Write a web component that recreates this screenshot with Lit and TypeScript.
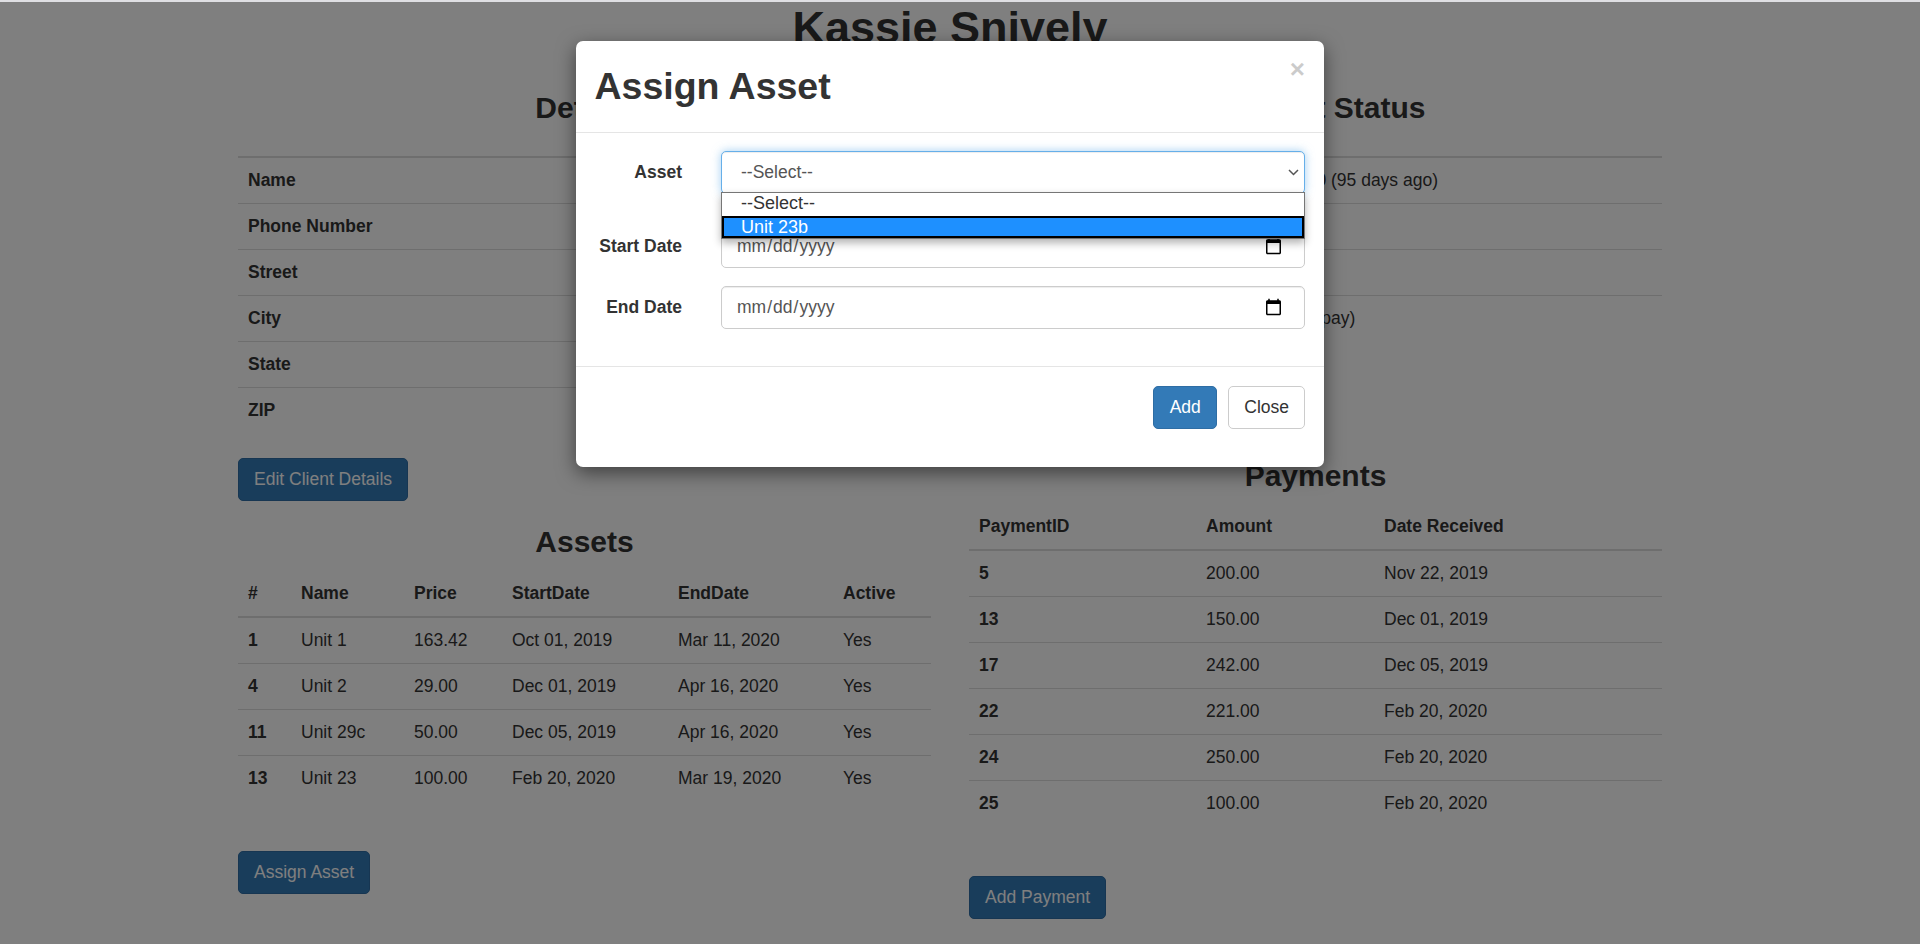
import { LitElement, css, html } from 'lit';
import { customElement } from 'lit/decorators.js';

const clientRows = [
  ['Name', 'Kassie Snively'],
  ['Phone Number', ''],
  ['Street', ''],
  ['City', ''],
  ['State', ''],
  ['ZIP', ''],
];

const statusRows = [
  ['Last Payment', 'Feb 20, 2020 (95 days ago)'],
  ['Assets', '4'],
  ['Payments', '6'],
  ['Balance', '1,163.42 (to pay)'],
];

const assets = [
  ['1', 'Unit 1', '163.42', 'Oct 01, 2019', 'Mar 11, 2020', 'Yes'],
  ['4', 'Unit 2', '29.00', 'Dec 01, 2019', 'Apr 16, 2020', 'Yes'],
  ['11', 'Unit 29c', '50.00', 'Dec 05, 2019', 'Apr 16, 2020', 'Yes'],
  ['13', 'Unit 23', '100.00', 'Feb 20, 2020', 'Mar 19, 2020', 'Yes'],
];

const payments = [
  ['5', '200.00', 'Nov 22, 2019'],
  ['13', '150.00', 'Dec 01, 2019'],
  ['17', '242.00', 'Dec 05, 2019'],
  ['22', '221.00', 'Feb 20, 2020'],
  ['24', '250.00', 'Feb 20, 2020'],
  ['25', '100.00', 'Feb 20, 2020'],
];

@customElement('app-root')
export class AppRoot extends LitElement {
  static styles = css`
    :host {
      display: block;
      height: 944px;
      overflow: hidden;
      position: relative;
      background: #fff;
      border-top: 2px solid #dfdfe3;
      color: #333;
      font-family: 'Liberation Sans', Arial, sans-serif;
      font-size: 17.5px;
      line-height: 25px;
    }
    * {
      box-sizing: border-box;
    }
    h1 {
      margin: 1px 0 0;
      padding-right: 20px;
      font-size: 45px;
      line-height: 50px;
      font-weight: 700;
      text-align: center;
    }
    h3 {
      margin: 0;
      font-size: 30px;
      line-height: 33px;
      font-weight: 700;
      text-align: center;
    }
    .columns {
      display: grid;
      grid-template-columns: 1fr 1fr;
      column-gap: 38px;
      padding: 0 258px 0 238px;
      margin-top: 38px;
    }
    .col {
      min-width: 0;
    }
    table {
      width: 100%;
      border-collapse: collapse;
      table-layout: fixed;
    }
    th,
    td {
      padding: 10px;
      text-align: left;
      border-top: 1px solid #ddd;
      font-weight: 400;
      white-space: nowrap;
    }
    th,
    td.key {
      font-weight: 700;
    }
    thead th {
      border-top: 0;
      border-bottom: 2px solid #ddd;
    }
    .detail {
      margin-top: 32px;
      border-top: 2px solid #ddd;
    }
    .detail tr:first-child td {
      border-top: 0;
    }
    .client .label-col {
      width: 50%;
    }
    .status .label-col {
      width: 244px;
    }
    .btn {
      display: inline-block;
      padding: 8px 15px;
      font: inherit;
      height: 43px;
      color: #fff;
      background: #337ab7;
      border: 1px solid #2e6da4;
      border-radius: 5px;
    }
    .btn.plain {
      color: #333;
      background: #fff;
      border-color: #ccc;
    }
    .btn.add {
      width: 64px;
      padding: 8px 0;
    }
    .edit {
      margin-top: 25px;
    }
    .assets-title {
      margin-top: 24px;
    }
    .assets-table {
      margin-top: 13px;
    }
    .assign {
      margin-top: 50px;
    }
    .payments-title {
      margin-top: 118px;
    }
    .payments-table {
      margin-top: 12px;
    }
    .add-pay {
      margin-top: 50px;
    }
    .a1 { width: 53px; }
    .a2 { width: 113px; }
    .a3 { width: 98px; }
    .a4 { width: 166px; }
    .a5 { width: 165px; }
    .p1 { width: 227px; }
    .p2 { width: 178px; }
    .backdrop {
      position: absolute;
      inset: 0;
      background: rgba(0, 0, 0, 0.5);
    }
    .modal {
      position: absolute;
      left: 576px;
      top: 39px;
      width: 748px;
      height: 426px;
      background: #fff;
      border-radius: 7px;
      box-shadow: 0 6px 19px rgba(0, 0, 0, 0.5);
    }
    .modal-header {
      position: relative;
      height: 92px;
      padding: 25px 19px 0 18.5px;
      border-bottom: 1px solid #e5e5e5;
    }
    .modal-header h2 {
      margin: 0;
      font-size: 37.5px;
      line-height: 41px;
      font-weight: 700;
    }
    .close {
      position: absolute;
      right: 19px;
      top: 15px;
      font-size: 26px;
      line-height: 26px;
      font-weight: 700;
      color: #000;
      opacity: 0.2;
    }
    .modal-body {
      position: relative;
      height: 234px;
      padding: 18px 19px 0 0;
      border-bottom: 1px solid #e5e5e5;
    }
    .row {
      display: grid;
      grid-template-columns: 106px 1fr;
      column-gap: 39px;
      align-items: center;
      margin-bottom: 18px;
    }
    .row.asset {
      margin-bottom: 31px;
    }
    .row label {
      text-align: right;
      font-weight: 700;
    }
    .control {
      display: block;
      width: 100%;
      height: 43px;
      padding: 7px 15px 7px 14px;
      font: inherit;
      color: #555;
      background: #fff;
      border: 1px solid #ccc;
      border-radius: 5px;
      box-shadow: inset 0 1px 1px rgba(0, 0, 0, 0.075);
    }
    .control::-webkit-calendar-picker-indicator {
      width: 19px;
      height: 19px;
      margin-right: 4px;
    }
    select.control {
      appearance: none;
      padding-left: 19px;
      border-color: #66afe9;
      outline: 0;
      background: #fff
        url("data:image/svg+xml,%3Csvg xmlns='http://www.w3.org/2000/svg' width='11' height='7' viewBox='0 0 11 7'%3E%3Cpath d='M1 1l4.5 4.5L10 1' fill='none' stroke='%23555' stroke-width='1.5'/%3E%3C/svg%3E")
        no-repeat right 5.5px center;
      box-shadow: inset 0 1px 1px rgba(0, 0, 0, 0.075), 0 0 10px rgba(102, 175, 233, 0.6);
    }
    .popup {
      position: absolute;
      left: 145px;
      top: 59px;
      width: 584px;
      height: 47px;
      background: #fff;
      border: 1px solid #767676;
      box-shadow: 0 4px 8px rgba(0, 0, 0, 0.3);
      font-size: 18px;
      line-height: 21px;
      color: #333;
    }
    .option {
      height: 21px;
      padding-left: 19px;
      white-space: nowrap;
    }
    .option.active {
      height: 22px;
      margin-top: 2px;
      line-height: 18px;
      padding-left: 17px;
      color: #fff;
      background: #1e90ff;
      border: 2px solid #000;
    }
    .modal-footer {
      display: flex;
      justify-content: flex-end;
      gap: 11px;
      padding: 19px 19px 0 0;
    }
  `;

  private detail(cls: string, rows: string[][]) {
    return html`<table class="detail ${cls}">
      <colgroup><col class="label-col" /><col /></colgroup>
      <tbody>
        ${rows.map((r) => html`<tr><td class="key">${r[0]}</td><td>${r[1]}</td></tr>`)}
      </tbody>
    </table>`;
  }

  private grid(cls: string, head: string[], colClass: string, rows: string[][]) {
    return html`<table class=${cls}>
      <colgroup>
        ${head.map((_, i) => html`<col class="${colClass}${i + 1}" />`)}
      </colgroup>
      <thead>
        <tr>${head.map((h) => html`<th>${h}</th>`)}</tr>
      </thead>
      <tbody>
        ${rows.map(
          (r) => html`<tr>${r.map((c, i) => html`<td class=${i === 0 ? 'key' : ''}>${c}</td>`)}</tr>`
        )}
      </tbody>
    </table>`;
  }

  render() {
    return html`
      <h1>Kassie Snively</h1>
      <div class="columns">
        <div class="col">
          <h3>Details</h3>
          ${this.detail('client', clientRows)}
          <button class="btn edit">Edit Client Details</button>
          <h3 class="assets-title">Assets</h3>
          ${this.grid('assets-table', ['#', 'Name', 'Price', 'StartDate', 'EndDate', 'Active'], 'a', assets)}
          <button class="btn assign">Assign Asset</button>
        </div>
        <div class="col">
          <h3>Account Status</h3>
          ${this.detail('status', statusRows)}
          <h3 class="payments-title">Payments</h3>
          ${this.grid('payments-table', ['PaymentID', 'Amount', 'Date Received'], 'p', payments)}
          <button class="btn add-pay">Add Payment</button>
        </div>
      </div>

      <div class="backdrop"></div>
      <div class="modal">
        <div class="modal-header">
          <h2>Assign Asset</h2>
          <span class="close">×</span>
        </div>
        <div class="modal-body">
          <div class="row asset">
            <label>Asset</label>
            <select class="control">
              <option>--Select--</option>
              <option>Unit 23b</option>
            </select>
          </div>
          <div class="row">
            <label>Start Date</label>
            <input class="control" type="date" />
          </div>
          <div class="row">
            <label>End Date</label>
            <input class="control" type="date" />
          </div>
          <div class="popup">
            <div class="option">--Select--</div>
            <div class="option active">Unit 23b</div>
          </div>
        </div>
        <div class="modal-footer">
          <button class="btn add">Add</button>
          <button class="btn plain">Close</button>
        </div>
      </div>
    `;
  }
}
